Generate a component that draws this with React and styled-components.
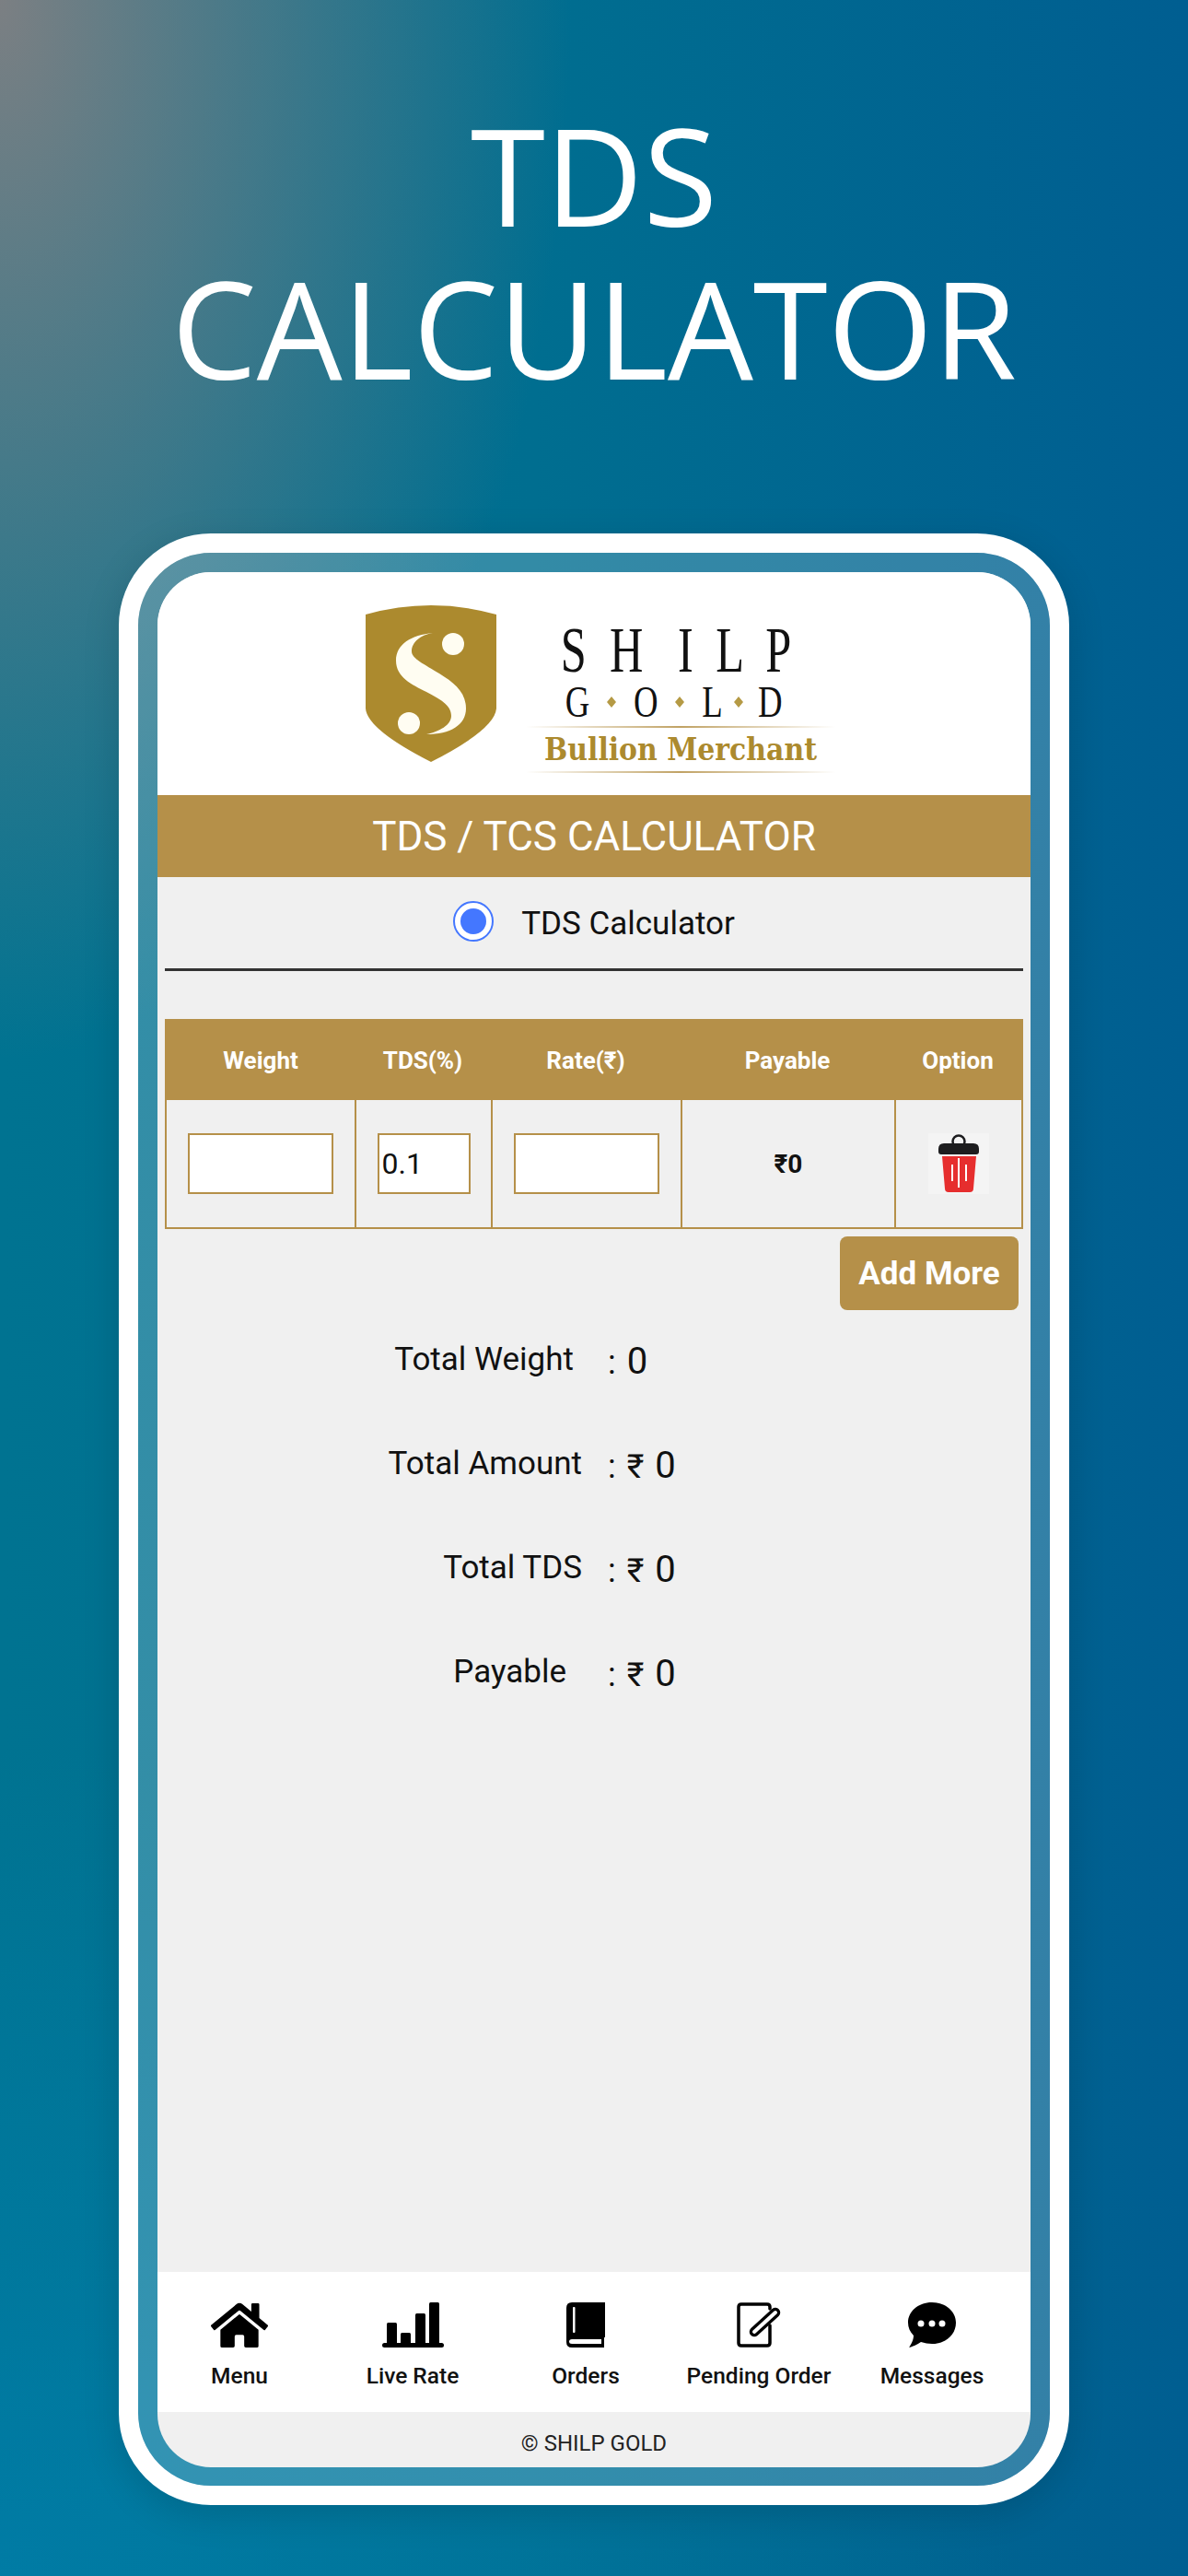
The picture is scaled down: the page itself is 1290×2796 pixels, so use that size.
import React from 'react';
import styled, { createGlobalStyle } from 'styled-components';
import { FaHome } from 'react-icons/fa';

const GOLD = '#b59049';

const Global = createGlobalStyle`
  html, body {
    margin: 0;
    padding: 0;
  }
  body {
    font-family: Roboto, "Liberation Sans", sans-serif;
  }
`;

const Page = styled.div`
  width: 1290px;
  height: 2796px;
  overflow: hidden;
  display: flex;
  flex-direction: column;
  align-items: center;
  background:
    radial-gradient(ellipse 620px 1150px at 0 0, rgba(130, 128, 130, 0.95) 0%, rgba(0, 114, 143, 0) 100%),
    radial-gradient(ellipse 1100px 900px at 0 100%, rgba(0, 128, 175, 0.65) 0%, rgba(0, 128, 175, 0) 100%),
    linear-gradient(90deg, #007391 0%, #006e90 45%, #005e91 100%);
`;

const Title = styled.h1`
  margin: 0;
  padding-top: 106px;
  height: 579px;
  flex: none;
  box-sizing: border-box;
  font-family: "Open Sans", "Noto Sans", sans-serif;
  font-weight: 400;
  font-size: 147px;
  line-height: 166px;
  color: #fff;
  text-align: center;
`;

const PhoneFrame = styled.div`
  width: 1032px;
  height: 2140px;
  flex: none;
  box-sizing: border-box;
  border: 21px solid #fff;
  border-radius: 100px;
  box-shadow: 0 10px 40px rgba(0, 0, 0, 0.14);
`;

const PhoneBezel = styled.div`
  height: 100%;
  box-sizing: border-box;
  padding: 21px 21px 20px;
  border-radius: 79px;
  background: rgba(255, 255, 255, 0.2);
`;

const Screen = styled.div`
  height: 100%;
  display: flex;
  flex-direction: column;
  border-radius: 58px;
  overflow: hidden;
  background: #f0f0f0;
`;

const LogoBar = styled.div`
  height: 242px;
  flex: none;
  box-sizing: border-box;
  padding: 26px 0 0 24px;
  background: #fff;
  display: flex;
  justify-content: center;
  align-items: flex-start;
`;

const Banner = styled.div`
  height: 89px;
  flex: none;
  background: ${GOLD};
  color: #fff;
  font-size: 44px;
  display: flex;
  align-items: center;
  justify-content: center;
`;

const Tabs = styled.div`
  margin: 0 8px;
  height: 102px;
  box-sizing: border-box;
  padding-top: 2px;
  border-bottom: 3px solid #333;
  display: flex;
  align-items: center;
  justify-content: center;
  gap: 30px;
  font-size: 35px;
  color: #111;
`;

const Radio = styled.span`
  width: 44px;
  height: 44px;
  margin-top: -5px;
  box-sizing: border-box;
  border: 2px solid #4477ff;
  border-radius: 50%;
  padding: 6px;
  background: #fff;
  &::before {
    content: '';
    display: block;
    width: 100%;
    height: 100%;
    border-radius: 50%;
    background: #4477ff;
  }
`;

const Table = styled.div`
  margin: 52px 8px 0;
  display: grid;
  grid-template-columns: 204px 148px 206px 232px 138px;
  border: 2px solid ${GOLD};
`;

const HeadCell = styled.div`
  height: 86px;
  background: ${GOLD};
  color: #fff;
  font-size: 26px;
  font-weight: 700;
  display: flex;
  align-items: center;
  justify-content: center;
`;

const Cell = styled.div`
  height: 138px;
  display: flex;
  align-items: center;
  justify-content: center;
  border-left: ${(p) => (p.$first ? 'none' : `2px solid ${GOLD}`)};
  font-size: 28px;
  font-weight: 700;
  color: #111;
`;

const Field = styled.input`
  width: ${(p) => p.$width}px;
  height: 66px;
  box-sizing: border-box;
  border: 2px solid ${GOLD};
  background: #fff;
  padding: 0 3px;
  font-family: inherit;
  font-size: 32px;
  color: #111;
  outline: none;
`;

const ActionRow = styled.div`
  margin: 8px 13px 0 0;
  display: flex;
  justify-content: flex-end;
`;

const AddButton = styled.button`
  width: 194px;
  height: 80px;
  border: none;
  border-radius: 8px;
  background: ${GOLD};
  color: #fff;
  font-family: inherit;
  font-size: 35px;
  font-weight: 700;
  padding: 0;
`;

const Summary = styled.div`
  margin-top: -1px;
  display: flex;
  flex-direction: column;
`;

const SummaryRow = styled.div`
  height: 113px;
  display: grid;
  grid-template-columns: 461px 1fr;
  align-items: center;
  color: #111;
`;

const SummaryLabel = styled.div`
  font-size: 35px;
  text-align: right;
  padding-right: ${(p) => p.$trail || 0}px;
  margin-top: -4px;
`;

const SummaryValue = styled.div`
  margin-left: 28px;
  font-size: 36px;
  word-spacing: 3px;
  white-space: pre;
`;

const Amount = styled.span`
  font-size: 40px;
`;

const Spacer = styled.div`
  flex: 1;
`;

const BottomNav = styled.div`
  height: 152px;
  flex: none;
  background: #fff;
`;

const NavRow = styled.div`
  margin-left: -5px;
  display: grid;
  grid-template-columns: repeat(5, 188px);
`;

const NavItem = styled.div`
  display: flex;
  flex-direction: column;
  align-items: center;
  padding-top: 33px;
  font-size: 24.5px;
  font-weight: 500;
  color: #111;
  white-space: nowrap;
`;

const NavIcon = styled.div`
  height: 50px;
  margin-bottom: 15px;
  display: flex;
  align-items: center;
  justify-content: center;
  svg {
    display: block;
  }
`;

const Footer = styled.div`
  height: 60px;
  flex: none;
  box-sizing: border-box;
  padding-top: 8px;
  display: flex;
  align-items: center;
  justify-content: center;
  font-size: 24px;
  color: #222;
`;

const Logo = () => (
  <svg width="520" height="195" viewBox="0 0 520 195">
    <defs>
      <linearGradient id="rule" x1="0" x2="1" y1="0" y2="0">
        <stop offset="0" stopColor="#c0a264" stopOpacity="0" />
        <stop offset="0.5" stopColor="#c0a264" />
        <stop offset="1" stopColor="#c0a264" stopOpacity="0" />
      </linearGradient>
    </defs>
    <path d="M0 20 Q71 0 142 20 L142 122 Q140 145 71 180 Q2 145 0 122 Z" fill="#ac8a2e" />
    <path d="M73 40 C50 42 33 52 33 70 C33 88 50 96 66 104 C84 113 93 120 93 130 C93 140 80 147 66 150 C92 150 109 140 109 122 C109 104 96 94 80 84 C64 74 50 68 50 60 C50 50 60 42 73 40 Z" fill="#fffdf2" />
    <circle cx="95" cy="52" r="12" fill="#fffdf2" />
    <circle cx="47" cy="138" r="12" fill="#fffdf2" />
    <g transform="scale(0.72 1)">
      <text x="294 368 471 528 603" y="82" fontFamily="Liberation Serif, serif" fontSize="70" fill="#111">SHILP</text>
    </g>
    <g transform="scale(0.75 1)">
      <text x="289 388 487 568" y="131" fontFamily="Liberation Serif, serif" fontSize="49" fill="#111">GOLD</text>
    </g>
    <path d="M267 109 L272 115 L267 121 L262 115 Z M341 109 L346 115 L341 121 L336 115 Z M405 109 L410 115 L405 121 L400 115 Z" fill="#b59a45" />
    <rect x="174" y="141" width="336" height="2" fill="url(#rule)" />
    <text x="194" y="178" textLength="296" lengthAdjust="spacingAndGlyphs" fontFamily="DejaVu Serif, serif" fontWeight="700" fontSize="33" fill="#ac8a2e">Bullion Merchant</text>
    <rect x="174" y="190" width="336" height="2" fill="url(#rule)" />
  </svg>
);

const Trash = () => (
  <svg width="66" height="66" viewBox="0 0 66 66">
    <rect width="66" height="66" fill="#f4f4f4" />
    <circle cx="33" cy="9" r="6.5" fill="none" stroke="#1d1d1f" strokeWidth="2.5" />
    <path d="M17 11 H49 Q55 11 55 17 V20 Q55 23 52 23 H14 Q11 23 11 20 V17 Q11 11 17 11 Z" fill="#1d1d1f" />
    <path d="M15 25 H52 L49 60 Q49 64 45 64 H22 Q18 64 18 60 Z" fill="#e62e2e" />
    <path d="M33 27 V59 M26 34 V52 M41 34 V52" stroke="#fff" strokeWidth="2" />
  </svg>
);

const BarsIcon = () => (
  <svg width="67" height="50" viewBox="0 0 67 50">
    <rect x="0" y="44" width="67" height="5" rx="2.5" fill="#000" />
    <rect x="5" y="22" width="11" height="24" rx="1.5" fill="#000" />
    <rect x="20" y="33" width="11" height="13" rx="1.5" fill="#000" />
    <rect x="36" y="12" width="11" height="34" rx="1.5" fill="#000" />
    <rect x="51" y="0" width="11" height="46" rx="1.5" fill="#000" />
  </svg>
);

const BookIcon = () => (
  <svg width="42" height="50" viewBox="0 0 42 50">
    <path d="M6 0 H42 V38 H41 V49 H6 Q0 49 0 43 V6 Q0 0 6 0 Z" fill="#000" />
    <rect x="7" y="5" width="2.5" height="28" rx="1" fill="#fff" />
    <path d="M6 40 H38 V45 H6 Q3 45 3 42.5 Q3 40 6 40 Z" fill="#fff" />
  </svg>
);

const NoteIcon = () => (
  <svg width="48" height="50" viewBox="0 0 48 50" fill="none" strokeLinecap="round">
    <path d="M36 7 V5 Q36 2 33 2 H5 Q2 2 2 5 V44 Q2 47 5 47 H33 Q36 47 36 44 V25" stroke="#000" strokeWidth="3.5" />
    <path d="M19 32 L42 11" stroke="#000" strokeWidth="10.5" />
    <path d="M19 32 L42 11" stroke="#fff" strokeWidth="4" />
  </svg>
);

const ChatIcon = () => (
  <svg width="52" height="50" viewBox="0 0 52 50">
    <path d="M26 0 C41 0 52 10 52 22 C52 35 41 45 26 45 C22 45 18 44 14 43 C10 46 5 48 1 49 C4 45 6 40 6 36 C2 32 0 27 0 22 C0 10 11 0 26 0 Z" fill="#000" />
    <circle cx="14" cy="23" r="3.5" fill="#fff" />
    <circle cx="26" cy="23" r="3.5" fill="#fff" />
    <circle cx="37" cy="23" r="3.5" fill="#fff" />
  </svg>
);

const navItems = [
  { label: 'Menu', icon: <FaHome size={62} color="#000" /> },
  { label: 'Live Rate', icon: <BarsIcon /> },
  { label: 'Orders', icon: <BookIcon /> },
  { label: 'Pending Order', icon: <NoteIcon /> },
  { label: 'Messages', icon: <ChatIcon /> },
];

const summary = [
  { label: 'Total Weight', prefix: ': ', trail: 9 },
  { label: 'Total Amount', prefix: ': ₹ ' },
  { label: 'Total TDS', prefix: ': ₹ ' },
  { label: 'Payable', prefix: ': ₹ ', trail: 17 },
];

export default function App() {
  return (
    <Page>
      <Global />
      <Title>
        TDS
        <br />
        CALCULATOR
      </Title>
      <PhoneFrame>
        <PhoneBezel>
          <Screen>
            <LogoBar>
              <Logo />
            </LogoBar>
            <Banner>TDS / TCS CALCULATOR</Banner>
            <Tabs>
              <Radio />
              TDS Calculator
            </Tabs>
            <Table>
              <HeadCell>Weight</HeadCell>
              <HeadCell>TDS(%)</HeadCell>
              <HeadCell>Rate(₹)</HeadCell>
              <HeadCell>Payable</HeadCell>
              <HeadCell>Option</HeadCell>
              <Cell $first>
                <Field $width={158} readOnly />
              </Cell>
              <Cell>
                <Field $width={101} readOnly value="0.1" />
              </Cell>
              <Cell>
                <Field $width={158} readOnly />
              </Cell>
              <Cell>₹0</Cell>
              <Cell>
                <Trash />
              </Cell>
            </Table>
            <ActionRow>
              <AddButton>Add More</AddButton>
            </ActionRow>
            <Summary>
              {summary.map((row) => (
                <SummaryRow key={row.label}>
                  <SummaryLabel $trail={row.trail}>{row.label}</SummaryLabel>
                  <SummaryValue>
                    {row.prefix}
                    <Amount>0</Amount>
                  </SummaryValue>
                </SummaryRow>
              ))}
            </Summary>
            <Spacer />
            <BottomNav>
              <NavRow>
                {navItems.map((item) => (
                  <NavItem key={item.label}>
                    <NavIcon>{item.icon}</NavIcon>
                    {item.label}
                  </NavItem>
                ))}
              </NavRow>
            </BottomNav>
            <Footer>© SHILP GOLD</Footer>
          </Screen>
        </PhoneBezel>
      </PhoneFrame>
    </Page>
  );
}
